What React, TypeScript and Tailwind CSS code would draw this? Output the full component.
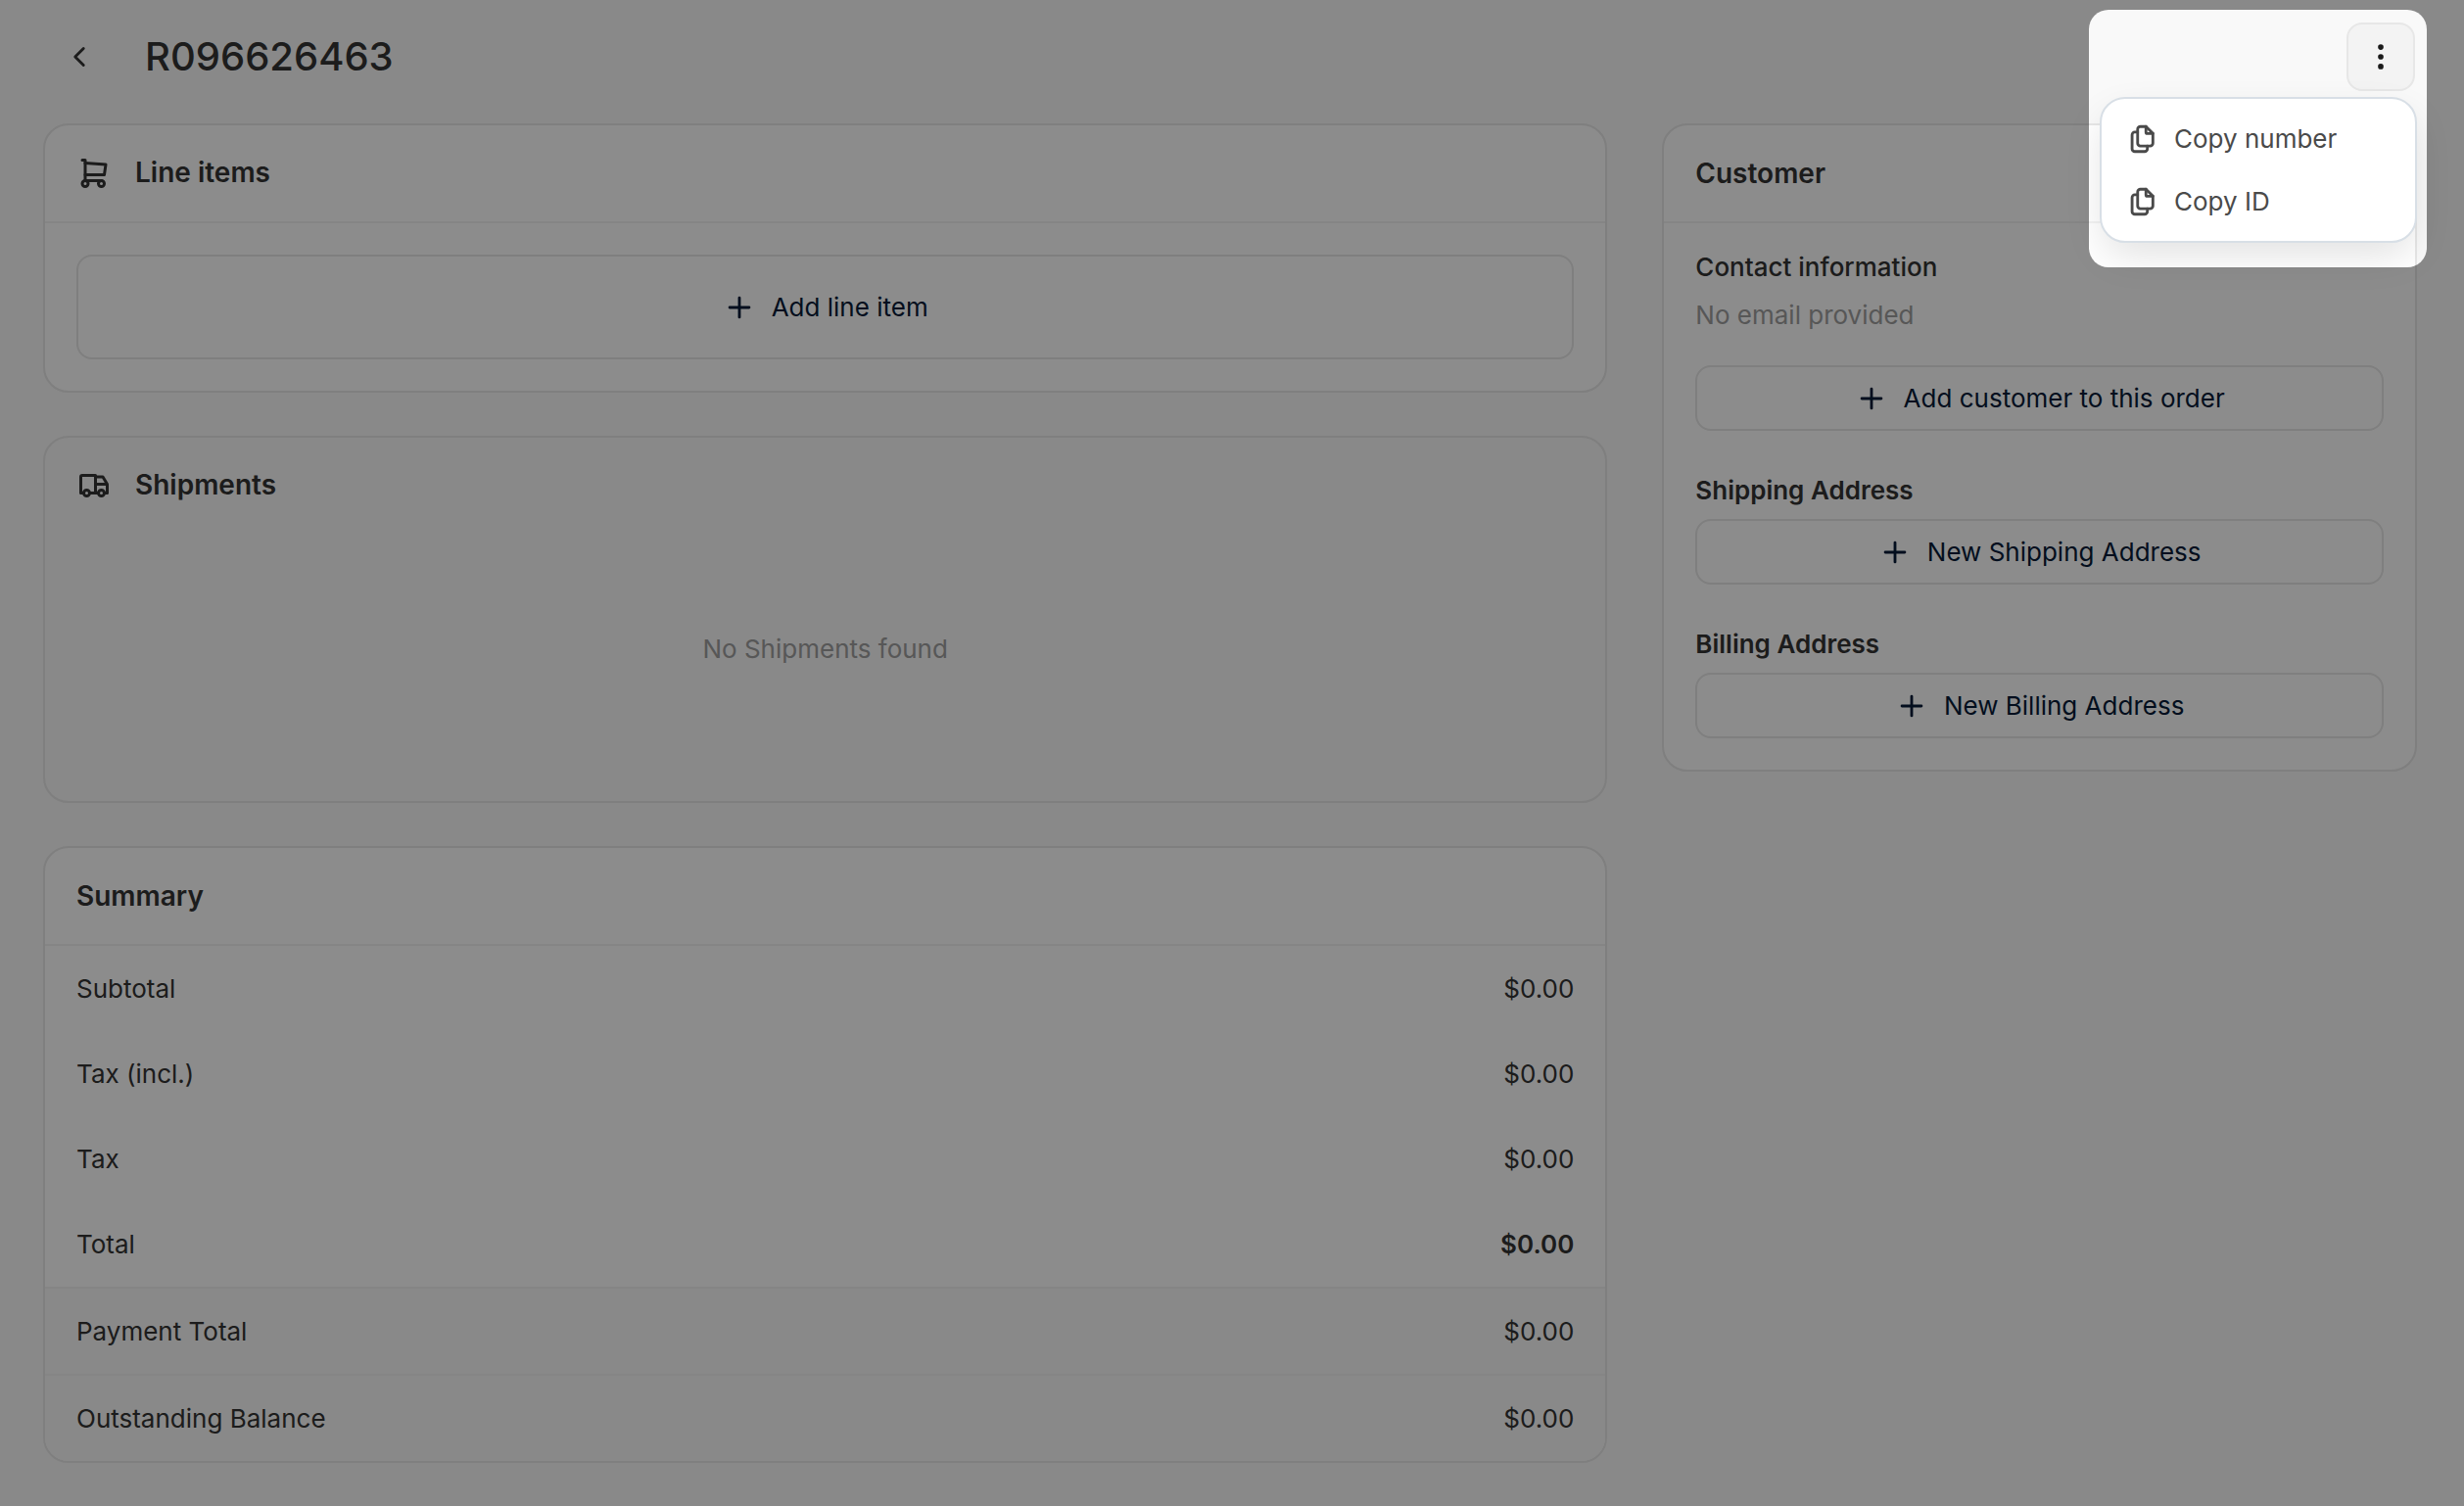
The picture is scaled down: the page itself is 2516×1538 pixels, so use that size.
import type { ReactNode } from "react";
import {
  TbChevronLeft,
  TbDotsVertical,
  TbFiles,
  TbPlus,
  TbShoppingCart,
  TbTruck,
} from "react-icons/tb";
import type { IconType } from "react-icons";

const totals = [
  { label: "Subtotal", amount: "$0.00" },
  { label: "Tax (incl.)", amount: "$0.00" },
  { label: "Tax", amount: "$0.00" },
  { label: "Total", amount: "$0.00", bold: true },
];

const payments = [
  { label: "Payment Total", amount: "$0.00" },
  { label: "Outstanding Balance", amount: "$0.00" },
];

const menuItems = ["Copy number", "Copy ID"];

function Card({ children, muted }: { children: ReactNode; muted?: boolean }) {
  return (
    <section
      className={`overflow-hidden rounded-[26px] border-2 border-[#e7e7e7] ${muted ? "bg-[#f9f9f9]" : "bg-white"}`}
    >
      {children}
    </section>
  );
}

function CardHeader({ title, icon: Icon, divider = true }: { title: string; icon?: IconType; divider?: boolean }) {
  return (
    <div className={`flex items-center px-8 ${divider ? "h-[100px] border-b-2 border-[#f3f3f3]" : "h-[98px]"}`}>
      {Icon && <Icon className="mr-6 size-9" />}
      <h2 className={`text-[28px] leading-10 font-semibold ${Icon ? "pb-0.5" : ""}`}>{title}</h2>
    </div>
  );
}

function AddButton({ label, tall }: { label: string; tall?: boolean }) {
  return (
    <button
      type="button"
      className={`flex w-full items-center justify-center gap-4 rounded-2xl border-2 border-[#e7e7e7] text-[26px] leading-10 text-[#071b37] ${tall ? "h-[107px]" : "h-[67px]"}`}
    >
      <TbPlus className="size-[34px]" />
      {label}
    </button>
  );
}

function OrderMenu() {
  return (
    <div className="relative ml-auto">
      <button
        type="button"
        aria-label="Order actions"
        className="mr-0.5 flex size-[70px] items-center justify-center rounded-2xl border-2 border-[#e7e7e7] bg-[#f3f3f3] text-[#1a1a1a]"
      >
        <TbDotsVertical className="size-[34px]" />
      </button>

      <div className="absolute top-[76px] right-0 z-10 w-[324px] rounded-[26px] border-2 border-[#d8dfe6] bg-white pt-[9px] pb-2 shadow-[0_16px_40px_-4px_rgba(0,0,0,0.12)]">
        {menuItems.map((item) => (
          <button
            key={item}
            type="button"
            className="flex h-16 w-full items-center gap-4 px-6 text-[26px] leading-10 text-[#4a4a4a]"
          >
            <TbFiles className="size-[34px]" />
            {item}
          </button>
        ))}
      </div>

      {/* Spotlight: everything outside of it is dimmed by its spread */}
      <div className="pointer-events-none absolute -top-[13px] -right-[10px] z-20 h-[263px] w-[345px] rounded-[20px] shadow-[0_0_0_3000px_rgba(0,0,0,0.45)]" />
    </div>
  );
}

export default function App() {
  return (
    <div className="min-h-screen overflow-hidden bg-[#f9f9f9] pr-12 pb-11 pl-11 font-['Inter',sans-serif] text-[26px] leading-10 text-[#333333]">
      <header className="flex items-center pt-[23px] pb-[33px]">
        <a href="#orders" aria-label="Back to orders" className="flex h-[70px] w-[74px] items-center justify-center">
          <TbChevronLeft className="size-[34px]" />
        </a>
        <h1 className="ml-[30px] text-[40px] leading-[56px] font-medium">R096626463</h1>
        <OrderMenu />
      </header>

      <main className="grid grid-cols-3 items-start gap-14">
        <div className="col-span-2 flex flex-col gap-11">
          <Card>
            <CardHeader title="Line items" icon={TbShoppingCart} />
            <div className="p-8">
              <AddButton label="Add line item" tall />
            </div>
          </Card>

          <Card muted>
            <CardHeader title="Shipments" icon={TbTruck} divider={false} />
            <p className="pt-[98px] pb-[135px] text-center text-[#9e9e9e]">No Shipments found</p>
          </Card>

          <Card>
            <CardHeader title="Summary" />
            <table className="w-full border-separate border-spacing-0">
              <tbody>
                {totals.map((row) => (
                  <tr key={row.label}>
                    <th scope="row" className="h-[87px] pl-8 text-left font-normal">{row.label}</th>
                    <td className={`pr-8 text-right ${row.bold ? "font-semibold" : ""}`}>{row.amount}</td>
                  </tr>
                ))}
                {payments.map((row) => (
                  <tr key={row.label} className="bg-[#f9f9f9]">
                    <th scope="row" className="h-[89px] border-t-2 border-[#f3f3f3] pl-8 text-left font-normal">
                      {row.label}
                    </th>
                    <td className="border-t-2 border-[#f3f3f3] pr-8 text-right">{row.amount}</td>
                  </tr>
                ))}
              </tbody>
            </table>
          </Card>
        </div>

        <Card>
          <CardHeader title="Customer" />
          <div className="px-8 pt-[25px] pb-8">
            <h3 className="font-medium">Contact information</h3>
            <p className="mt-[9px] mb-[31px] text-[#9e9e9e]">No email provided</p>
            <AddButton label="Add customer to this order" />
            <h3 className="mt-[41px] mb-[9px] font-semibold">Shipping Address</h3>
            <AddButton label="New Shipping Address" />
            <h3 className="mt-[41px] mb-[9px] font-semibold">Billing Address</h3>
            <AddButton label="New Billing Address" />
          </div>
        </Card>
      </main>
    </div>
  );
}
